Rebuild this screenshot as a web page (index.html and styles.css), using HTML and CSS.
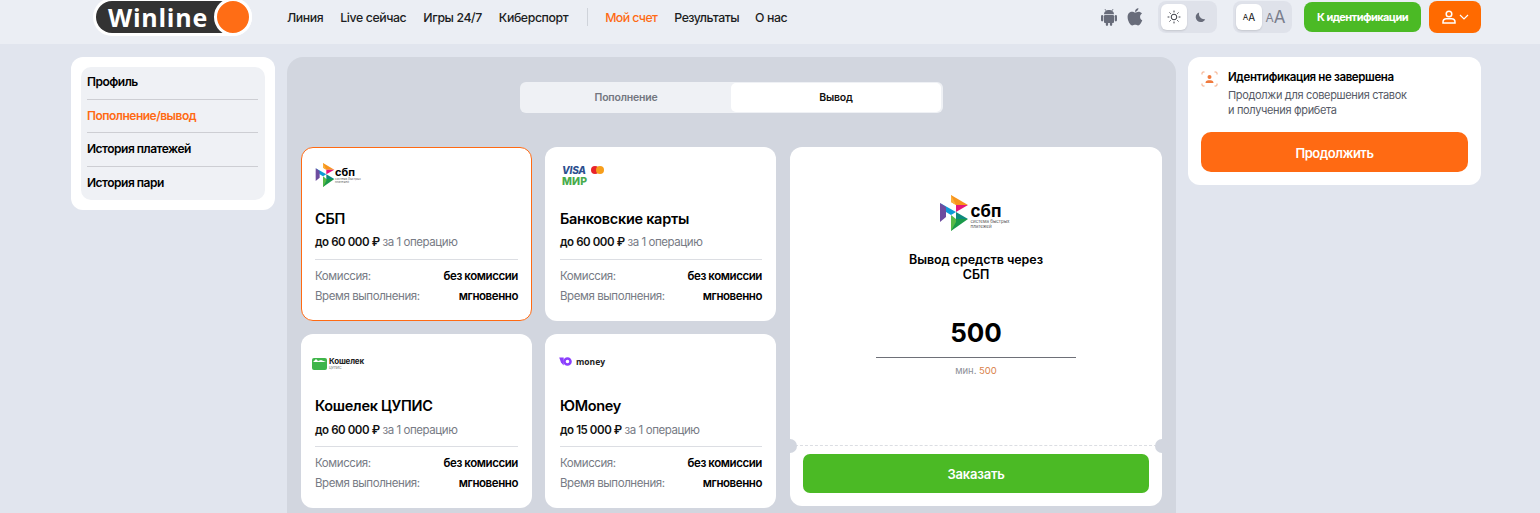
FILE: index.html
```html
<!DOCTYPE html>
<html lang="ru">
<head>
<meta charset="utf-8">
<title>Winline</title>
<link rel="stylesheet" href="styles.css">
</head>
<body>
<header class="header">
  <div class="logo"><span class="logo-pill">Winline</span><span class="logo-dot"></span></div>
  <nav class="nav">
    <a>Линия</a><a>Live сейчас</a><a>Игры 24/7</a><a>Киберспорт</a>
    <span class="nav-sep"></span>
    <a class="nav-active">Мой счет</a><a class="nav-results">Результаты</a><a>О нас</a>
  </nav>
  <div class="header-right">
    <svg class="os-icon" viewBox="0 0 16 18"><path d="M4 1.2l1.2 1.7M12 1.2l-1.200 1.700" stroke="#686c7a" stroke-width="1" fill="none"/><path d="M3 6.300C3 3.800 5.200 2 8 2s5 1.800 5 4.300z"/><rect x="3" y="7" width="10" height="8" rx="1"/><rect x="0" y="7" width="2.300" height="6.500" rx="1.150"/><rect x="13.700" y="7" width="2.300" height="6.500" rx="1.150"/><rect x="4.800" y="13" width="2.300" height="5" rx="1.150"/><rect x="8.900" y="13" width="2.300" height="5" rx="1.150"/></svg>
    <svg class="os-icon apple" viewBox="0 0 16 18"><path d="M8.200 4.600c-1-.1-2-.8-3.200-.8C2.800 3.800.6 5.500.6 9c0 3.800 2.600 8.500 4.700 8.500 1 0 1.700-.7 2.900-.7s1.800.7 2.900.7c1.700 0 3.300-2.800 4.200-5.200-2.800-1.200-3-5.300-.3-6.800-.9-1.300-2.300-1.800-3.500-1.800-1.400 0-2.600.9-3.300.9z"/><path d="M8 3.900C7.900 2.100 9.500.3 11.400.1c.2 1.900-1.500 3.800-3.400 3.800z"/></svg>
    <div class="seg seg-theme">
      <span class="seg-item seg-on">
        <svg class="sun" viewBox="0 0 14 14"><circle cx="7" cy="7" r="2.800"/><path d="M7 .6v1.800M7 11.600v1.800M.6 7h1.800M11.600 7h1.800M2.500 2.500l1.200 1.200M10.300 10.300l1.200 1.200M2.500 11.500l1.200-1.200M10.300 3.700l1.200-1.200"/></svg>
      </span>
      <span class="seg-item">
        <svg class="moon" viewBox="0 0 12 12"><path d="M4.500.6C2 1.500.6 3.600.8 6c.3 3 2.800 5.200 5.700 5 2-.1 3.700-1.300 4.600-3.200C7.500 8.600 3.400 5.300 4.500.6z"/></svg>
      </span>
    </div>
    <div class="seg seg-font">
      <span class="seg-item seg-on aa-small"><small>A</small>A</span>
      <span class="seg-item aa-large"><small>A</small>A</span>
    </div>
    <button class="btn-ident">К идентификации</button>
    <button class="btn-user">
      <svg class="user-ico" viewBox="0 0 14 14"><circle cx="7" cy="4" r="2.800"/><path d="M1 13v-1c0-2 1.500-3.300 3.500-3.300h5c2 0 3.500 1.300 3.500 3.300v1z"/></svg>
      <svg class="chev" viewBox="0 0 10 6"><path d="M1 1l4 4 4-4"/></svg>
    </button>
  </div>
</header>

<main class="layout">
  <aside class="side-card">
    <ul class="side-menu">
      <li>Профиль</li>
      <li class="side-active">Пополнение/вывод</li>
      <li>История платежей</li>
      <li>История пари</li>
    </ul>
  </aside>

  <section class="panel">
    <div class="tabs">
      <span class="tab">Пополнение</span>
      <span class="tab tab-on">Вывод</span>
    </div>
    <div class="pay-area">
      <div class="pay-grid">
        <article class="pay-card pay-card-on">
          <div class="pay-logo">
            <svg class="sbp-small" viewBox="0 0 30 36"><use href="#sbp-mark"/></svg>
            <span class="sbp-word"><b>сбп</b><i>система быстрых<br>платежей</i></span>
          </div>
          <h3>СБП</h3>
          <p class="limit"><b>до 60 000 ₽</b> за 1 операцию</p>
          <dl class="terms">
            <div><dt>Комиссия:</dt><dd>без комиссии</dd></div>
            <div><dt>Время выполнения:</dt><dd>мгновенно</dd></div>
          </dl>
        </article>
        <article class="pay-card">
          <div class="pay-logo logo-cards">
            <div class="visa-row"><span class="visa">VISA</span><span class="mc"><i></i><i></i></span></div>
            <span class="mir">МИР</span>
          </div>
          <h3>Банковские карты</h3>
          <p class="limit"><b>до 60 000 ₽</b> за 1 операцию</p>
          <dl class="terms">
            <div><dt>Комиссия:</dt><dd>без комиссии</dd></div>
            <div><dt>Время выполнения:</dt><dd>мгновенно</dd></div>
          </dl>
        </article>
        <article class="pay-card">
          <div class="pay-logo logo-wallet">
            <svg class="wallet" viewBox="0 0 15 12"><rect width="15" height="12" rx="2" fill="#3fb54a"/><path d="M1 4l3-3 2 2 3-1 5 2z" fill="#fff"/></svg>
            <span class="wallet-word"><b>Кошелек</b><i>ЦУПИС</i></span>
          </div>
          <h3>Кошелек ЦУПИС</h3>
          <p class="limit"><b>до 60 000 ₽</b> за 1 операцию</p>
          <dl class="terms">
            <div><dt>Комиссия:</dt><dd>без комиссии</dd></div>
            <div><dt>Время выполнения:</dt><dd>мгновенно</dd></div>
          </dl>
        </article>
        <article class="pay-card">
          <div class="pay-logo logo-money">
            <svg class="ym" viewBox="0 0 14 10"><path d="M0 .5h5v9L2 6z" fill="#8b3ffd"/><circle cx="9.200" cy="5" r="3.400" fill="none" stroke="#8b3ffd" stroke-width="2.800"/></svg>
            <span class="money-word">money</span>
          </div>
          <h3>ЮMoney</h3>
          <p class="limit"><b>до 15 000 ₽</b> за 1 операцию</p>
          <dl class="terms">
            <div><dt>Комиссия:</dt><dd>без комиссии</dd></div>
            <div><dt>Время выполнения:</dt><dd>мгновенно</dd></div>
          </dl>
        </article>
      </div>

      <article class="detail">
        <div class="detail-top">
          <div class="detail-logo">
            <svg class="sbp-large" viewBox="0 0 30 36">
              <defs>
                <g id="sbp-mark">
                  <path fill="#f7941d" d="M12 0l17 10H17l-5-3z"/>
                  <path fill="#e5157a" d="M17 10h12l-12 7z"/>
                  <path fill="#0f9ad6" d="M1 8l16 9-5 3-5-3z"/>
                  <path fill="#6d4c9f" d="M1 8l6 4v10l-6 5z"/>
                  <path fill="#1a9a4a" d="M12 36l17-12H17l-5 3z"/>
                  <path fill="#0e8a7d" d="M17 17l12 7H17z"/>
                  <path fill="#58b947" d="M12 20l5 4v3l-5 9z"/>
                  <path fill="#fbb03b" d="M12 0l5 10-5-3z"/>
                </g>
              </defs>
              <use href="#sbp-mark"/>
            </svg>
            <span class="sbp-word-large"><b>сбп</b><i>система быстрых<br>платежей</i></span>
          </div>
          <h2>Вывод средств через<br>СБП</h2>
          <div class="amount">500</div>
          <p class="min">мин. <span>500</span></p>
        </div>
        <div class="detail-bottom">
          <button class="btn-order">Заказать</button>
        </div>
      </article>
    </div>
  </section>

  <aside class="ident-card">
    <div class="ident-head">
      <svg class="ident-ico" viewBox="0 0 17 16"><path class="corner" d="M1 3.500V2a1 1 0 0 1 1-1h1.500M13.500 1H15a1 1 0 0 1 1 1v1.500M1 12.500V14a1 1 0 0 0 1 1h1.500M13.500 15H15a1 1 0 0 0 1-1v-1.500"/><circle cx="8.500" cy="6" r="2"/><path d="M4.500 12c0-1.800 1.300-2.800 2.800-2.800h2.400c1.500 0 2.800 1 2.800 2.800z"/></svg>
      <div>
        <h4>Идентификация не завершена</h4>
        <p>Продолжи для совершения ставок<br>и получения фрибета</p>
      </div>
    </div>
    <button class="btn-continue">Продолжить</button>
  </aside>
</main>
</body>
</html>
```
FILE: styles.css
```css
* { box-sizing: border-box; margin: 0; padding: 0; }
html, body { height: 513px; overflow: hidden; }
body {
  background: #e1e5ee;
  font-family: Inter, "Noto Sans", sans-serif;
  color: #000;
}
button { border: 0; font-family: inherit; cursor: pointer; }

/* Header */
.header {
  height: 44px;
  background: #ebeef4;
  display: flex;
  align-items: center;
  padding: 0 59px 0 93px;
}
.logo {
  width: 159px;
  height: 38px;
  margin-top: -10px;
  display: flex;
  align-items: center;
  background: #fff;
  border-radius: 19px;
  flex: none;
  padding: 3px;
}
.logo-pill {
  flex: 1;
  height: 32px;
  background: #333;
  color: #fff;
  border-radius: 16px 0 0 16px;
  font-family: "Open Sans", sans-serif;
  font-weight: 700;
  font-size: 25px;
  line-height: 32px;
  padding-left: 12px;
  letter-spacing: .75px;
}
.logo-dot {
  width: 38px;
  height: 38px;
  margin: -3px -3px -3px -20px;
  border-radius: 50%;
  background: #ff6d15;
  border: 3px solid #fff;
  flex: none;
}
.nav {
  display: flex;
  align-items: center;
  margin-left: 35px;
  gap: 17px;
  font-size: 12.300px;
  font-weight: 500;
  color: #1b1d22;
  letter-spacing: -.4px;
  margin-top: -10px;
}
.nav-sep { width: 1px; height: 18px; background: #cfd3da; margin: 0 0 0 2px; }
.nav-active { color: #ff6a13; letter-spacing: -.6px; }
.nav-results { letter-spacing: -.5px; margin-right: -1px; }
.header-right {
  margin-left: auto;
  display: flex;
  align-items: center;
  margin-top: -10px;
}
.os-icon { width: 16px; height: 18px; fill: #686c7a; display: block; }
.apple { margin-left: 10px; margin-right: 15px; }
.seg {
  width: 59px;
  height: 32px;
  background: #dfe2ea;
  border-radius: 8px;
  padding: 3px;
  display: flex;
}
.seg-font { margin-left: 16px; }
.seg-item {
  width: 26px;
  height: 26px;
  border-radius: 6px;
  display: flex;
  align-items: center;
  justify-content: center;
}
.seg-item + .seg-item { width: 27px; }
.seg-on { background: #fff; box-shadow: 0 1px 2px rgba(0, 0, 0, .12); }
.sun { width: 14px; height: 14px; fill: none; stroke: #3a3d46; stroke-width: 1; }
.moon { width: 11px; height: 11px; fill: #686c7a; }
.aa-small { font-size: 10px; font-weight: 400; color: #111; }
.aa-small small { font-size: 8px; }
.aa-large { font-size: 17px; color: #7a7e8c; font-weight: 400; }
.aa-large small { font-size: 12px; }
.btn-ident {
  margin-left: 12px;
  width: 117px;
  height: 30px;
  background: #4bba25;
  color: #fff;
  font-size: 11px;
  font-weight: 700;
  letter-spacing: -.6px;
  border-radius: 8px;
}
.btn-user {
  margin-left: 8px;
  width: 52px;
  height: 32px;
  background: #ff6a00;
  border-radius: 8px;
  display: flex;
  align-items: center;
  justify-content: center;
  gap: 3px;
}
.user-ico { width: 14px; height: 14px; fill: none; stroke: #fff; stroke-width: 1.500; }
.chev { width: 10px; height: 6px; fill: none; stroke: #fff; stroke-width: 1.200; }

/* Layout */
.layout {
  display: grid;
  grid-template-columns: 204px 889px 293px;
  gap: 12px;
  padding: 13px 0 0 71px;
  align-items: start;
}
.side-card {
  background: #fff;
  border-radius: 12px;
  padding: 10px;
}
.side-menu {
  list-style: none;
  background: #eff1f5;
  border-radius: 10px;
  padding: 0 7px 0 6px;
  font-size: 12px;
  font-weight: 600;
  letter-spacing: -.5px;
}
.side-menu li {
  height: 33px;
  line-height: 30px;
  border-bottom: 1px solid #cdced3;
}
.side-menu li:nth-child(2) { line-height: 32px; }
.side-menu li:nth-child(3) { height: 34px; line-height: 32px; }
.side-menu li:last-child { border-bottom: 0; line-height: 31px; }
.side-active { color: #ff6a13; }

/* Panel */
.panel {
  height: 456px;
  background: #d2d6df;
  border-radius: 16px 16px 0 0;
  padding: 25px 14px 0;
}
.tabs {
  width: 423px;
  height: 31px;
  margin: 0 auto 34px;
  background: #eff1f5;
  border-radius: 6px;
  display: flex;
  padding: 1px 2px 1px 1px;
  font-size: 10.500px;
  font-weight: 600;
  letter-spacing: -.2px;
}
.tab {
  flex: 1;
  display: flex;
  align-items: center;
  justify-content: center;
  color: #73767f;
  border-radius: 5px;
}
.tab-on { background: #fff; color: #111; }
.pay-area { display: flex; gap: 14px; align-items: flex-start; }
.pay-grid {
  display: grid;
  grid-template-columns: 231px 231px;
  grid-auto-rows: 174px;
  gap: 13px;
}
.pay-card {
  background: #fff;
  border-radius: 12px;
  padding: 14px 13px 0;
  border: 1px solid transparent;
  display: flex;
  flex-direction: column;
}
.pay-card:nth-child(even) { padding-left: 14px; }
.pay-card-on { border-color: #ff6a13; }
.pay-logo { height: 40px; display: flex; align-items: flex-start; }
.pay-card h3 {
  font-size: 14.500px;
  font-weight: 600;
  line-height: 20px;
  margin-top: 7px;
  letter-spacing: -.3px;
}
.limit {
  font-size: 11.500px;
  line-height: 15px;
  margin-top: 6px;
  color: #777b85;
  letter-spacing: -.43px;
  padding-bottom: 9px;
  border-bottom: 1px solid #dcdee3;
}
.pay-card:nth-child(n+3) .limit { margin-top: 7px; padding-bottom: 8px; }
.limit b { color: #111; font-weight: 600; }
.terms { font-size: 11.500px; margin-top: 6px; letter-spacing: -.42px; }
.terms div { display: flex; justify-content: space-between; height: 20px; line-height: 20px; }
.terms dt { color: #777b85; }
.terms dd { font-weight: 600; color: #000; }

/* Logos */
.sbp-small { width: 20px; height: 24px; margin-top: 1px; flex: none; }
.sbp-word { display: flex; flex-direction: column; margin: 6px 0 0 0; line-height: 1; }
.sbp-word b { font-size: 11px; font-weight: 700; line-height: 9px; }
.sbp-word i { font-style: normal; font-size: 3px; color: #666; line-height: 3px; margin-top: 1px; }
.logo-cards { flex-direction: column; padding: 2px 0 0 2px; }
.visa-row { display: flex; align-items: center; gap: 4px; height: 11px; }
.visa { font-size: 10px; font-weight: 800; font-style: italic; color: #2c4f8f; letter-spacing: -.2px; }
.mc { display: flex; margin-left: 1px; }
.mc i { width: 8px; height: 8px; border-radius: 50%; background: #e8232a; }
.mc i + i { background: #f79e1b; margin-left: -3px; }
.mir { font-size: 10.500px; font-weight: 800; color: #48ab4c; line-height: 12px; margin-top: 1px; letter-spacing: .2px; }
.logo-wallet { margin: 8px 0 0 -3px; height: 32px; }
.wallet { width: 15px; height: 12px; margin-top: 1px; flex: none; }
.wallet-word { display: flex; flex-direction: column; margin-left: 2px; }
.wallet-word b { font-size: 8px; line-height: 9px; font-weight: 700; color: #222; letter-spacing: -.2px; }
.wallet-word i { font-size: 3.500px; line-height: 4px; font-style: normal; color: #666; }
.logo-money { margin: 7px 0 0 -1px; height: 33px; gap: 4px; }
.ym { width: 13px; height: 9px; margin-top: 1px; flex: none; }
.money-word { font-size: 8.500px; font-weight: 700; line-height: 11px; color: #222; font-family: "Open Sans", sans-serif; }

/* Detail */
.detail {
  width: 372px;
  height: 359px;
  background: #fff;
  border-radius: 12px;
  display: flex;
  flex-direction: column;
  position: relative;
}
.detail::before, .detail::after {
  content: "";
  position: absolute;
  top: 292px;
  width: 14px;
  height: 14px;
  border-radius: 50%;
  background: #d2d6df;
}
.detail::before { left: -7px; }
.detail::after { right: -7px; }
.detail-top {
  height: 299px;
  border-bottom: 1px dashed #dcdee3;
  padding-top: 48px;
  display: flex;
  flex-direction: column;
  align-items: center;
}
.detail-logo { display: flex; align-items: flex-start; height: 37px; margin-right: 4px; }
.sbp-large { width: 30px; height: 36px; flex: none; }
.sbp-word-large { display: flex; flex-direction: column; margin: 9px 0 0 2px; }
.sbp-word-large b { font-size: 17px; font-weight: 700; line-height: 14px; }
.sbp-word-large i { font-style: normal; font-size: 4.500px; line-height: 5px; color: #555; margin-top: 1px; }
.detail h2 {
  font-size: 12.500px;
  font-weight: 600;
  line-height: 15px;
  text-align: center;
  margin-top: 20px;
  letter-spacing: -.06px;
}
.amount {
  width: 200px;
  height: 44px;
  margin-top: 32px;
  text-align: center;
  font-size: 26px;
  font-weight: 700;
  line-height: 38px;
  border-bottom: 1px solid #6e7078;
}
.min { font-size: 9.500px; line-height: 12px; margin-top: 7px; color: #8d9099; }
.min span { color: #d9824a; }
.detail-bottom { padding: 8px 13px 0; }
.btn-order {
  width: 100%;
  height: 39px;
  background: #4bba25;
  color: #fff;
  border-radius: 7px;
  font-size: 13px;
  font-weight: 600;
  letter-spacing: -.2px;
}

/* Identification */
.ident-card {
  background: #fff;
  border-radius: 12px;
  padding: 13px 13px;
  height: 128px;
}
.ident-head { display: flex; gap: 10px; height: 62px; }
.ident-ico { width: 17px; height: 16px; margin-top: 1px; fill: #f07a3d; flex: none; }
.corner { fill: none; stroke: #f4a57c; stroke-width: 1; }
.ident-head h4 { font-size: 11.500px; font-weight: 600; line-height: 14px; letter-spacing: -.38px; }
.ident-head p { font-size: 11px; line-height: 15px; color: #565a66; margin-top: 4px; letter-spacing: -.33px; }
.btn-continue {
  width: 100%;
  height: 40px;
  padding-top: 1px;
  background: #ff6a13;
  color: #fff;
  border-radius: 10px;
  font-size: 13px;
  font-weight: 600;
  letter-spacing: -.5px;
}
```
